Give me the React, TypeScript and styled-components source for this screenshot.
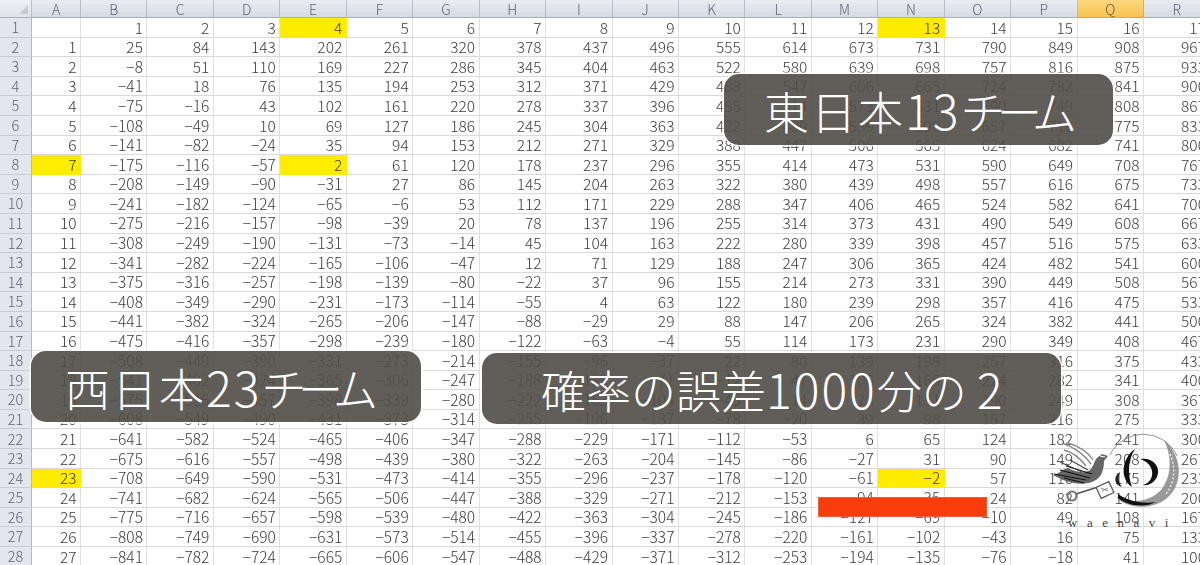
import React from "react";
import styled, { createGlobalStyle } from "styled-components";

const GlobalStyle = createGlobalStyle`
  html, body {
    margin: 0;
    padding: 0;
    background: #fff;
    overflow: hidden;
  }
`;

const Screen = styled.div`
  position: relative;
  width: 1200px;
  height: 565px;
  overflow: hidden;
  background: #fff;
  font-family: "Noto Sans CJK JP", "Liberation Sans", sans-serif;
`;

const Sheet = styled.div`
  display: grid;
  grid-template-columns: 32px 49px repeat(17, 66.44px);
  grid-template-rows: 18px;
  grid-auto-rows: 19.6px;
  width: 1211px;
  filter: blur(0.3px);
`;

const Corner = styled.div`
  position: relative;
  background: linear-gradient(#eef1f5, #dfe3e9);
  border-right: 1px solid #b9bfc8;
  border-bottom: 1px solid #a9b0bb;
  box-sizing: border-box;

  &::after {
    content: "";
    position: absolute;
    right: 3px;
    bottom: 3px;
    border-style: solid;
    border-width: 0 0 9px 9px;
    border-color: transparent transparent #c6cbd2 transparent;
  }
`;

const ColHead = styled.div<{ $active?: boolean }>`
  display: flex;
  align-items: center;
  justify-content: center;
  box-sizing: border-box;
  font-size: 14px;
  font-weight: 300;
  line-height: 1;
  color: ${(p) => (p.$active ? "#6a5a2c" : "#5c6675")};
  background: ${(p) =>
    p.$active
      ? "linear-gradient(#fbd87c, #f8c352)"
      : "linear-gradient(#e9edf2, #d6dbe3)"};
  border-right: 1px solid ${(p) => (p.$active ? "#e2ad3f" : "#b9bfc8")};
  border-bottom: 1px solid ${(p) => (p.$active ? "#e2a83a" : "#a9b0bb")};
`;

const RowHead = styled.div`
  display: flex;
  align-items: center;
  justify-content: center;
  box-sizing: border-box;
  font-size: 14.5px;
  font-weight: 300;
  line-height: 1;
  color: #5c6675;
  background: #e3e7ed;
  border-right: 1px solid #b4bac4;
  border-bottom: 1px solid #c6ccd4;
`;

const Cell = styled.div<{ $mark?: boolean }>`
  display: flex;
  align-items: center;
  justify-content: flex-end;
  box-sizing: border-box;
  padding-right: 3.5px;
  font-size: 15.5px;
  font-weight: 300;
  line-height: 1;
  color: #3c3c3c;
  background: ${(p) => (p.$mark ? "#ffec00" : "#fff")};
  border-right: 1px solid ${(p) => (p.$mark ? "#ffec00" : "#e0e0e0")};
  border-bottom: 1px solid ${(p) => (p.$mark ? "#ffec00" : "#d9d9d9")};
`;

const Label = styled.div<{ $x: number; $y: number; $w: number; $pad: number; $track?: number }>`
  position: absolute;
  left: ${(p) => p.$x}px;
  top: ${(p) => p.$y}px;
  width: ${(p) => p.$w}px;
  height: 71px;
  box-sizing: border-box;
  padding-left: ${(p) => p.$pad}px;
  border-radius: 15px;
  background: rgba(80, 76, 72, 0.9);
  box-shadow: 0 0 0 1.5px rgba(255, 255, 255, 0.85);
  color: #fff;
  font-size: 45px;
  font-weight: 300;
  line-height: 71px;
  letter-spacing: ${(p) => p.$track ?? 0}px;
  white-space: pre;
`;

const Digits = styled.span`
  font-size: 48px;
  letter-spacing: 2px;
`;

const Kana = styled.span`
  letter-spacing: -8.5px;
`;

const RedBar = styled.div`
  position: absolute;
  left: 818px;
  top: 497px;
  width: 169px;
  height: 20px;
  box-sizing: border-box;
  background: #f83c0c;
  border: 1px solid #e8613e;
`;

const LogoBox = styled.div`
  position: absolute;
  left: 1048px;
  top: 428px;
  width: 136px;
  height: 104px;
`;

const LogoName = styled.div`
  position: absolute;
  left: 20px;
  bottom: 3px;
  font-family: "Liberation Serif", serif;
  font-size: 13px;
  letter-spacing: 9.5px;
  line-height: 1;
  color: #444;
  white-space: nowrap;
`;

const COLS = "ABCDEFGHIJKLMNOPQR".split("");
const MARKS = ["1:4", "1:13", "8:0", "8:4", "24:0", "24:13"];

// 1000 * (n / 17 - a / 30)
const value = (n: number, a: number) => {
  const v = Math.round(1000 * (n / 17 - a / 30));
  return v < 0 ? `\u2212${-v}` : `${v}`;
};

const cellText = (row: number, col: number) => {
  if (row === 1) return col === 0 ? "" : `${col}`;
  if (col === 0) return `${row - 1}`;
  return value(col, row - 1);
};

const Logo = () => (
  <svg width="136" height="92" viewBox="0 0 136 92">
    {/* moon */}
    <path d="M62 27 A37 37 0 0 1 129 28" fill="none" stroke="#888" strokeWidth="0.9" />
    <path
      d="M116 12 C130 24 135 44 127 60 C118 78 94 84 74 74 C72 73 70 71 68 69 C84 76 102 74 113 62 C124 48 124 28 116 12 Z"
      fill="#777"
      opacity="0.75"
    />
    <path d="M122 26 C128 40 127 54 118 66" fill="none" stroke="#eee" strokeWidth="1.4" strokeDasharray="2 2" />
    <path d="M70 70 C80 78 96 80 108 74 C96 76 82 74 70 66 Z" fill="#111" />
    {/* emblem */}
    <path d="M87 21 C74 30 71 50 84 59 C80 48 79 33 87 21 Z" fill="#111" />
    <path d="M92 31 C104 29 111 37 110 45 C109 53 102 58 95 57 C102 55 105 49 104 43 C103 37 98 33 92 31 Z" fill="#111" />
    <path d="M72 44 C65 48 66 57 74 59 C70 54 70 49 72 44 Z" fill="#222" />
    {/* bird */}
    <path
      d="M50 29 L54 26 L60 28 L56 33 C56 40 54 50 46 53 C36 58 20 56 5 47 C12 46 12 42 20 40 C28 44 36 46 42 42 C46 38 46 32 50 29 Z"
      fill="#666"
    />
    <path d="M6 46 L38 52 M12 42 L42 50 M18 38 L44 46 M16 50 L36 55" stroke="#111" strokeWidth="1.1" />
    <path d="M14 15 C24 18 36 26 43 36 M20 15 C30 18 40 24 45 32 M16 22 C24 24 32 30 38 38" fill="none" stroke="#888" strokeWidth="1.4" />
    <path d="M22 32 L40 42 M12 34 L34 44" stroke="#444" strokeWidth="1.1" />
    <path d="M52 28 L57 29" stroke="#fff" strokeWidth="1" />
    {/* key */}
    <path d="M28 66 L50 59" stroke="#555" strokeWidth="1.6" />
    <rect x="50" y="56" width="14" height="12" transform="rotate(-25 57 62)" fill="#fff" stroke="#555" strokeWidth="1.2" />
    <path d="M53 60 L60 63 M54 63 L60 60" stroke="#888" strokeWidth="1" />
    <circle cx="24" cy="68" r="4.5" fill="none" stroke="#777" strokeWidth="2.2" />
  </svg>
);

export default function App() {
  const rows = Array.from({ length: 28 }, (_, i) => i + 1);
  return (
    <Screen>
      <GlobalStyle />
      <Sheet>
        <Corner />
        {COLS.map((c) => (
          <ColHead key={c} $active={c === "Q"}>
            {c}
          </ColHead>
        ))}
        {rows.map((r) => (
          <React.Fragment key={r}>
            <RowHead>{r}</RowHead>
            {COLS.map((c, i) => (
              <Cell key={c} $mark={MARKS.includes(`${r}:${i}`)}>
                {cellText(r, i)}
              </Cell>
            ))}
          </React.Fragment>
        ))}
      </Sheet>
      <Label $x={724} $y={74} $w={389} $pad={40} $track={2}>
        東日本<Digits>13</Digits><Kana>チーム</Kana>
      </Label>
      <Label $x={31} $y={351} $w={390} $pad={34} $track={2}>
        西日本<Digits>23</Digits><Kana>チーム</Kana>
      </Label>
      <Label $x={482} $y={353} $w={579} $pad={59}>
        確率の誤差<Digits>1000</Digits>分の <Digits>2</Digits>
      </Label>
      <RedBar />
      <LogoBox>
        <Logo />
        <LogoName>waenavi</LogoName>
      </LogoBox>
    </Screen>
  );
}
